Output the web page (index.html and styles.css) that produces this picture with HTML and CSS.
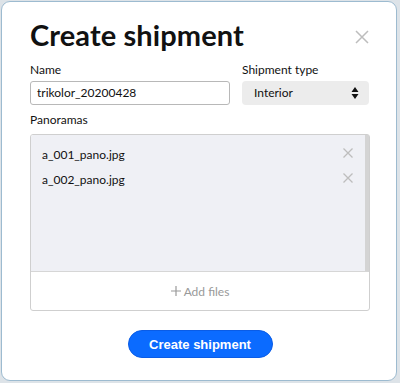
FILE: index.html
```html
<!doctype html>
<html>
<head>
<meta charset="utf-8">
<title>Create shipment</title>
<link rel="stylesheet" href="styles.css">
</head>
<body>
<div class="dialog">
	<div class="head">
		<h1>Create shipment</h1>
		<span class="close"><svg width="14" height="14" viewBox="0 0 14 14"><path d="M1 1L13 13M13 1L1 13" stroke="#bdbdbd" stroke-width="1.5" fill="none"/></svg></span>
	</div>
	<div class="row">
		<div class="field">
			<label>Name</label>
			<div class="input">trikolor_20200428</div>
		</div>
		<div class="field">
			<label>Shipment type</label>
			<div class="select">Interior
				<svg width="8" height="14" viewBox="0 0 8 14"><path d="M4 1L7.5 6H0.5Z M4 13L7.5 8H0.5Z" fill="#111"/></svg>
			</div>
		</div>
	</div>
	<label class="pano-label">Panoramas</label>
	<div class="pano">
		<ul class="files">
			<li><span>a_001_pano.jpg</span><svg width="10" height="10" viewBox="0 0 10 10"><path d="M0.5 0.5L9.5 9.5M9.5 0.5L0.5 9.5" stroke="#bdbdbd" stroke-width="1.3" fill="none"/></svg></li>
			<li><span>a_002_pano.jpg</span><svg width="10" height="10" viewBox="0 0 10 10"><path d="M0.5 0.5L9.5 9.5M9.5 0.5L0.5 9.5" stroke="#bdbdbd" stroke-width="1.3" fill="none"/></svg></li>
		</ul>
		<div class="add"><svg width="10" height="10" viewBox="0 0 10 10"><path d="M5 0V10M0 5H10" stroke="#9a9a9a" stroke-width="1.2" fill="none"/></svg> Add files</div>
	</div>
	<div class="actions">
		<button class="btn">Create shipment</button>
	</div>
</div>
</body>
</html>
```

FILE: styles.css
```css
html, body { margin: 0; padding: 0; }
body { background: #dde3e8; padding: 1px 3px 1px 1px; font-family: Lato, "Noto Sans", sans-serif; color: #111; }
ul { padding: 0; margin: 0; list-style: none; }
.dialog { height: 380px; box-sizing: border-box; background: #fff; border: 1px solid #9dbbd0; border-radius: 9px; padding: 16px 26px 0 28px; }
.head { display: flex; justify-content: space-between; align-items: flex-start; }
.head h1 { margin: 0; font-size: 29px; line-height: 34px; font-weight: 700; letter-spacing: 0.1px; }
.close { margin-top: 12px; margin-right: 1px; display: flex; }
.row { display: grid; grid-template-columns: 200px 127px; gap: 12px; margin-top: 11px; }
.field { display: flex; flex-direction: column; }
label { display: block; font-size: 12px; line-height: 14px; margin-bottom: 4px; }
.input { height: 24px; box-sizing: border-box; border: 1px solid #b8b8b8; border-radius: 3px; padding: 0 6px; font-size: 12px; line-height: 22px; }
.select { height: 24px; box-sizing: border-box; background: #ececec; border-radius: 4px; padding: 0 10px 0 12px; font-size: 12px; line-height: 24px; display: flex; justify-content: space-between; align-items: center; }
.pano-label { margin-top: 8px; margin-bottom: 7px; }
.pano { border: 1px solid #cfcfcf; border-radius: 3px; height: 177px; box-sizing: border-box; display: flex; flex-direction: column; }
.files { flex: 1; background: #eff0f5; border-right: 4px solid #d4d4d4; border-bottom: 1px solid #d6d6d6; padding: 7px 11px 0 11px; border-radius: 2px 0 0 0; }
.files li { height: 25px; display: flex; justify-content: space-between; align-items: center; font-size: 12px; }
.files li svg { margin-right: 1px; margin-top: -3px; }
.add { height: 38px; display: flex; align-items: center; justify-content: center; gap: 3px; color: #999; font-size: 12px; }
.actions { display: flex; justify-content: center; margin-top: 19px; }
.btn { width: 145px; height: 28px; border: 1px solid #0a5ce6; border-radius: 14px; background: #0b6bff; color: #fff; font-family: "Liberation Sans", Arial, sans-serif; font-weight: 700; font-size: 13px; padding: 0; }
```
